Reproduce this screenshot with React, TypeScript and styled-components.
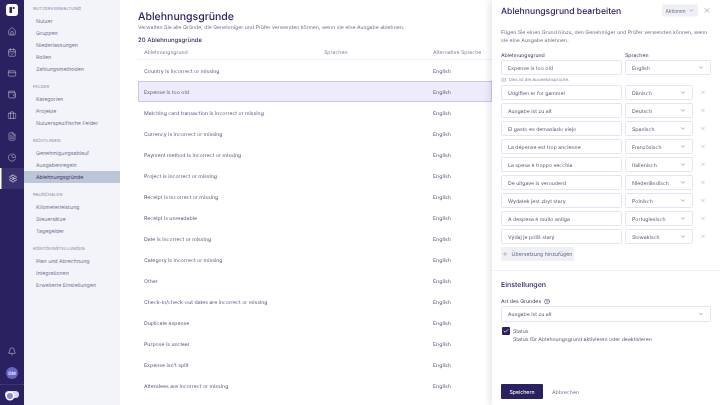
import React from 'react';
import styled, { createGlobalStyle } from 'styled-components';
import {
  Bell,
  Briefcase,
  CalendarCheck,
  ChevronDown,
  CircleHelp,
  CreditCard,
  FileText,
  House,
  PieChart,
  Plus,
  Settings,
  Wallet,
  X,
  Check,
  Info,
} from 'lucide-react';

const navy = '#2a2260';
const ink = '#34335a';
const muted = '#6d7190';
const line = '#e3e6f2';

const GlobalStyle = createGlobalStyle`
  html, body {
    margin: 0;
    padding: 0;
    background: #fff;
    overflow: hidden;
  }
  * {
    box-sizing: border-box;
  }
  body {
    font-family: Inter, "Noto Sans", sans-serif;
    color: ${ink};
    text-rendering: geometricPrecision;
  }
`;

const Viewport = styled.div`
  width: 720px;
  height: 405px;
  overflow: hidden;
`;

// the app is laid out for a 1440 wide screen and shown at half size
const Page = styled.div`
  display: flex;
  width: 1440px;
  height: 810px;
  overflow: hidden;
  transform: scale(0.5);
  transform-origin: 0 0;
  opacity: 0.999;
`;

const Rail = styled.nav`
  width: 48px;
  flex: none;
  display: flex;
  flex-direction: column;
  align-items: center;
  background: ${navy};
  color: #c6c4de;
`;

const Logo = styled.div`
  width: 24px;
  height: 24px;
  margin: 8px 0 10px;
  border-radius: 6px;
  background: #fff;
  display: flex;
  align-items: center;
  justify-content: center;
`;

const RailItem = styled.div<{ $active?: boolean }>`
  width: 48px;
  height: 42px;
  padding-left: ${p => (p.$active ? '1px' : '0')};
  display: flex;
  align-items: center;
  justify-content: center;
  border-left: ${p => (p.$active ? '3px solid #fff' : 'none')};
  background: ${p => (p.$active ? '#3a3270' : 'transparent')};
  color: ${p => (p.$active ? '#eeedf7' : 'inherit')};
`;

const RailFoot = styled.div`
  margin-top: auto;
  width: 100%;
  display: flex;
  flex-direction: column;
  align-items: center;
`;

const Avatar = styled.div`
  width: 24px;
  height: 24px;
  margin: 22px 0 10px;
  border-radius: 50%;
  background: #6a66c4;
  color: #eeedf7;
  font-size: 9px;
  font-weight: 600;
  display: flex;
  align-items: center;
  justify-content: center;
`;

const RailToggleWrap = styled.div`
  width: 100%;
  padding: 12px 0 14px;
  border-top: 2px dotted #4a4480;
  display: flex;
  justify-content: center;
`;

const RailToggle = styled.div`
  width: 28px;
  height: 14px;
  padding: 1px;
  border-radius: 7px;
  background: #d6d5f5;
  display: flex;
  &::before {
    content: '';
    flex: none;
    width: 12px;
    height: 12px;
    border-radius: 50%;
    border: 3px solid #fff;
    background: #8a86dc;
  }
`;

const SubNav = styled.aside`
  width: 192px;
  flex: none;
  padding-top: 6px;
  background: #f2f4fa;
`;

const NavSection = styled.div`
  margin-bottom: 12px;
`;

const NavTitle = styled.div`
  height: 24px;
  padding-left: 18px;
  line-height: 24px;
  font-size: 8.5px;
  letter-spacing: 0.2px;
  color: #7b7f9b;
  white-space: nowrap;
`;

const NavItem = styled.div<{ $active?: boolean }>`
  height: 24px;
  padding-left: 24px;
  line-height: 24px;
  font-size: 10.5px;
  color: ${p => (p.$active ? ink : muted)};
  background: ${p => (p.$active ? '#bcc6d8' : 'transparent')};
  white-space: nowrap;
`;

const Main = styled.main`
  width: 744px;
  flex: none;
  padding: 20px 0 0 36px;
  overflow: hidden;
`;

const Title = styled.h1`
  margin: 0;
  font-size: 21px;
  line-height: 26px;
  font-weight: 500;
  color: ${navy};
`;

const Subtitle = styled.p`
  margin: 0;
  padding-top: 2px;
  font-size: 10.4px;
  line-height: 14px;
  color: ${muted};
  white-space: nowrap;
`;

const Count = styled.div`
  margin-top: 8px;
  font-size: 12px;
  line-height: 18px;
  font-weight: 500;
  color: ${ink};
`;

const Row = styled.div<{ $selected?: boolean; $head?: boolean }>`
  display: grid;
  grid-template-columns: 360px 218px 1fr;
  align-items: center;
  height: ${p => (p.$head ? '32px' : '42px')};
  padding-left: 12px;
  font-size: 10.4px;
  color: ${p => (p.$head ? '#7b7f9b' : '#55587a')};
  background: ${p => (p.$selected ? '#eeecfc' : 'transparent')};
  box-shadow: ${p => (p.$selected ? 'inset 0 0 0 2px #c9c6ef' : 'none')};
  border-bottom: ${p => (p.$head ? '2px dotted ' + line : 'none')};
`;

const Panel = styled.section`
  width: 456px;
  flex: none;
  display: flex;
  flex-direction: column;
  background: #fff;
  box-shadow: -6px 0 12px rgba(60, 60, 110, 0.12);
  position: relative;
`;

const PanelHead = styled.header`
  height: 42px;
  padding: 0 18px;
  display: flex;
  align-items: center;
`;

const PanelTitle = styled.h2`
  margin: 0;
  flex: 1;
  font-size: 17.2px;
  font-weight: 500;
  color: ${navy};
`;

const ActionsButton = styled.button`
  width: 72px;
  height: 24px;
  padding: 0;
  border: 0;
  border-radius: 2px;
  background: #eef0f6;
  font: inherit;
  font-size: 9.6px;
  color: ${muted};
  display: flex;
  align-items: center;
  justify-content: center;
  gap: 6px;
`;

const CloseButton = styled.span`
  margin-left: 10px;
  width: 16px;
  display: flex;
  color: #8f93ab;
`;

const PanelBody = styled.div`
  padding: 12px 18px 0;
`;

const Description = styled.p`
  margin: 0;
  padding-top: 2px;
  font-size: 10.4px;
  line-height: 16px;
  color: ${muted};
`;

const Labels = styled.div`
  display: grid;
  grid-template-columns: 248px 172px;
  margin-top: 14px;
  height: 18px;
`;

const Label = styled.label`
  display: flex;
  align-items: center;
  gap: 6px;
  font-size: 10.4px;
  line-height: 18px;
  color: ${ink};
`;

const TransRow = styled.div<{ $flush?: boolean }>`
  display: flex;
  align-items: center;
  gap: 6px;
  height: 30px;
  margin-bottom: ${p => (p.$flush ? '0' : '6px')};
`;

const TextField = styled.div`
  width: 242px;
  height: 30px;
  padding-left: 12px;
  flex: none;
  display: flex;
  align-items: center;
  border: 2px solid ${line};
  border-radius: 3px;
  background: #fff;
  font-size: 10.4px;
  color: #55587a;
`;

const SelectField = styled.div<{ $width: number; $height?: number }>`
  width: ${p => p.$width}px;
  height: ${p => p.$height ?? 30}px;
  padding: 0 12px;
  flex: none;
  display: flex;
  align-items: center;
  justify-content: space-between;
  border: 2px solid ${line};
  border-radius: 3px;
  background: #fff;
  font-size: 10.4px;
  color: #55587a;
`;

const RemoveButton = styled.span`
  margin-left: 8px;
  display: flex;
  color: #a3a8c0;
`;

const Hint = styled.div`
  height: 20px;
  display: flex;
  align-items: center;
  gap: 6px;
  font-size: 8.5px;
  color: #7b7f9b;
`;

const AddButton = styled.button`
  width: 146px;
  height: 28px;
  margin-top: 2px;
  padding: 0;
  border: 0;
  border-radius: 2px;
  background: #eef0f6;
  font: inherit;
  font-size: 10.4px;
  color: ${muted};
  display: flex;
  align-items: center;
  justify-content: center;
  gap: 8px;
`;

const SettingsBlock = styled.div`
  margin-top: 18px;
  padding: 18px 18px 0;
  border-top: 2px solid #f2f3f8;
`;

const SectionTitle = styled.h3`
  margin: 0 0 14px;
  font-size: 14px;
  line-height: 20px;
  font-weight: 500;
  color: ${navy};
`;

const StatusRow = styled.div`
  display: flex;
  gap: 6px;
  margin-top: 10px;
  padding-left: 2px;
`;

const CheckBox = styled.span`
  width: 16px;
  height: 16px;
  flex: none;
  border-radius: 2px;
  background: ${navy};
  color: #fff;
  display: flex;
  align-items: center;
  justify-content: center;
`;

const StatusText = styled.div`
  font-size: 10.4px;
  line-height: 16px;
  color: #55587a;
`;

const Footer = styled.footer`
  margin-top: auto;
  padding: 0 18px 12px;
  display: flex;
  align-items: center;
  gap: 18px;
`;

const SaveButton = styled.button`
  width: 84px;
  height: 30px;
  padding: 0;
  border: 0;
  border-radius: 2px;
  background: ${navy};
  color: #fff;
  font: inherit;
  font-size: 10.4px;
`;

const CancelLink = styled.span`
  font-size: 10.4px;
  color: ${muted};
`;

const navGroups = [
  { title: 'NUTZERVERWALTUNG', items: ['Nutzer', 'Gruppen', 'Niederlassungen', 'Rollen', 'Zahlungsmethoden'] },
  { title: 'FELDER', items: ['Kategorien', 'Projekte', 'Nutzerspezifische Felder'] },
  { title: 'RICHTLINIEN', items: ['Genehmigungsablauf', 'Ausgabenregeln', 'Ablehnungsgründe'] },
  { title: 'PAUSCHALEN', items: ['Kilometerleistung', 'Steuersätze', 'Tagegelder'] },
  { title: 'KONTOEINSTELLUNGEN', items: ['Plan und Abrechnung', 'Integrationen', 'Erweiterte Einstellungen'] },
];

const reasons = [
  'Country is incorrect or missing',
  'Expense is too old',
  'Matching card transaction is incorrect or missing',
  'Currency is incorrect or missing',
  'Payment method is incorrect or missing',
  'Project is incorrect or missing',
  'Receipt is incorrect or missing',
  'Receipt is unreadable',
  'Date is incorrect or missing',
  'Category is incorrect or missing',
  'Other',
  'Check-in/check-out dates are incorrect or missing',
  'Duplicate expense',
  'Purpose is unclear',
  "Expense isn't split",
  'Attendees are incorrect or missing',
];

const translations = [
  ['Udgiften er for gammel', 'Dänisch'],
  ['Ausgabe ist zu alt', 'Deutsch'],
  ['El gasto es demasiado viejo', 'Spanisch'],
  ['La dépense est trop ancienne', 'Französisch'],
  ['La spesa è troppo vecchia', 'Italienisch'],
  ['De uitgave is verouderd', 'Niederländisch'],
  ['Wydatek jest zbyt stary', 'Polnisch'],
  ['A despesa é muito antiga', 'Portugiesisch'],
  ['Výdaj je príliš starý', 'Slowakisch'],
];

const railIcons = [House, CalendarCheck, CreditCard, Wallet, Briefcase, FileText, PieChart];

const App: React.FC = () => (
  <Viewport>
    <GlobalStyle />
    <Page>
      <Rail>
        <Logo>
          <svg width="18" height="18" viewBox="0 0 18 18">
            <rect x="4" y="3" width="5" height="12" rx="1" fill={navy} />
            <rect x="10.5" y="3" width="4" height="4" rx="1.5" fill={navy} />
          </svg>
        </Logo>
        {railIcons.map((Icon, i) => (
          <RailItem key={i}>
            <Icon size={18} strokeWidth={1.5} />
          </RailItem>
        ))}
        <RailItem $active>
          <Settings size={18} strokeWidth={1.8} />
        </RailItem>
        <RailFoot>
          <Bell size={18} strokeWidth={1.5} />
          <Avatar>DM</Avatar>
          <RailToggleWrap>
            <RailToggle />
          </RailToggleWrap>
        </RailFoot>
      </Rail>

      <SubNav>
        {navGroups.map(group => (
          <NavSection key={group.title}>
            <NavTitle>{group.title}</NavTitle>
            {group.items.map(item => (
              <NavItem key={item} $active={item === 'Ablehnungsgründe'}>
                {item}
              </NavItem>
            ))}
          </NavSection>
        ))}
      </SubNav>

      <Main>
        <Title>Ablehnungsgründe</Title>
        <Subtitle>Verwalten Sie alle Gründe, die Genehmiger und Prüfer verwenden können, wenn sie eine Ausgabe ablehnen.</Subtitle>
        <Count>20 Ablehnungsgründe</Count>
        <Row $head>
          <span>Ablehnungsgrund</span>
          <span>Sprachen</span>
          <span>Alternative Sprache</span>
        </Row>
        {reasons.map(reason => (
          <Row key={reason} $selected={reason === 'Expense is too old'}>
            <span>{reason}</span>
            <span />
            <span>English</span>
          </Row>
        ))}
      </Main>

      <Panel>
        <PanelHead>
          <PanelTitle>Ablehnungsgrund bearbeiten</PanelTitle>
          <ActionsButton>
            Aktionen <ChevronDown size={12} />
          </ActionsButton>
          <CloseButton>
            <X size={16} />
          </CloseButton>
        </PanelHead>
        <PanelBody>
          <Description>
            Fügen Sie einen Grund hinzu, den Genehmiger und Prüfer verwenden können, wenn sie eine Ausgabe ablehnen.
          </Description>
          <Labels>
            <Label>Ablehnungsgrund</Label>
            <Label>Sprachen</Label>
          </Labels>
          <TransRow $flush>
            <TextField>Expense is too old</TextField>
            <SelectField $width={172}>
              English <ChevronDown size={12} />
            </SelectField>
          </TransRow>
          <Hint>
            <Info size={10} color="#7b78d0" /> Dies ist die Ausweichsprache.
          </Hint>
          {translations.map(([text, language]) => (
            <TransRow key={language}>
              <TextField>{text}</TextField>
              <SelectField $width={136}>
                {language} <ChevronDown size={12} />
              </SelectField>
              <RemoveButton>
                <X size={12} />
              </RemoveButton>
            </TransRow>
          ))}
          <AddButton>
            <Plus size={10} /> Übersetzung hinzufügen
          </AddButton>
        </PanelBody>
        <SettingsBlock>
          <SectionTitle>Einstellungen</SectionTitle>
          <Label>
            Art des Grundes <CircleHelp size={12} />
          </Label>
          <SelectField $width={420} $height={32}>
            Ausgabe ist zu alt <ChevronDown size={12} />
          </SelectField>
          <StatusRow>
            <CheckBox>
              <Check size={12} strokeWidth={3} />
            </CheckBox>
            <StatusText>
              Status
              <br />
              Status für Ablehnungsgrund aktivieren oder deaktivieren
            </StatusText>
          </StatusRow>
        </SettingsBlock>
        <Footer>
          <SaveButton>Speichern</SaveButton>
          <CancelLink>Abbrechen</CancelLink>
        </Footer>
      </Panel>
    </Page>
  </Viewport>
);

export default App;
